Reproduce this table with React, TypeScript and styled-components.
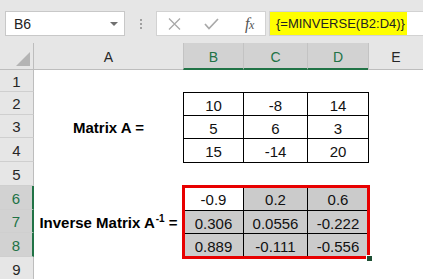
import React from "react";
import styled, { createGlobalStyle } from "styled-components";

const Global = createGlobalStyle`
  html, body { margin: 0; padding: 0; background: #fff; }
  body { font-family: "Liberation Sans", Arial, sans-serif; overflow: hidden; }
  * { box-sizing: border-box; }
`;

const GREEN = "#217346";

const Page = styled.div`
  width: 423px;
  height: 279px;
  overflow: hidden;
  display: flex;
  flex-direction: column;
  background: #fff;
`;

const FormulaBar = styled.div`
  height: 43px;
  flex: none;
  background: #e6e6e6;
  display: flex;
  align-items: flex-start;
  padding: 11px 0 0 5px;
`;

const NameBox = styled.div`
  width: 120px;
  height: 25px;
  background: #fff;
  border: 1px solid #c8c8c8;
  display: flex;
  align-items: center;
  justify-content: space-between;
  padding: 0 6px 0 8px;
  font-size: 14px;
  color: #222;
`;

const Caret = styled.span`
  width: 0;
  height: 0;
  border-left: 4px solid transparent;
  border-right: 4px solid transparent;
  border-top: 4px solid #707070;
`;

const Grip = styled.div`
  display: flex;
  flex-direction: column;
  gap: 2px;
  margin: 8px 14px 0 15px;
`;

const GripDot = styled.span`
  width: 2px;
  height: 2px;
  background: #a0a0a0;
`;

const EditBox = styled.div`
  width: 110px;
  height: 25px;
  background: #fff;
  border: 1px solid #d2d2d2;
  display: flex;
  align-items: center;
  padding-left: 11px;
`;

const IconSlot = styled.span<{ $gap: number }>`
  display: flex;
  margin-right: ${(p) => p.$gap}px;
`;

const Fx = styled.span`
  font-family: "Liberation Serif", "Times New Roman", serif;
  font-style: italic;
  font-size: 16px;
  color: #555;
  letter-spacing: -0.5px;
`;

const FxSub = styled.span`
  font-size: 12px;
`;

const FormulaBox = styled.div`
  flex: 1;
  margin-left: 3px;
  height: 25px;
  background: #fff;
  border: 1px solid #d2d2d2;
  border-right: none;
  display: flex;
`;

const Highlight = styled.div`
  width: 137px;
  height: 100%;
  background: #ffff00;
  display: flex;
  align-items: center;
  padding-left: 6px;
  font-size: 13px;
  color: #222;
  white-space: nowrap;
`;

const Sheet = styled.div`
  flex: 1;
  display: grid;
  grid-template-columns: 34px 149px 60px 64px 61px 1fr;
  grid-template-rows: 27px 22px 23px 23px 24px 24px 24px 23px 24px 24px;
  overflow: hidden;
`;

const Corner = styled.div`
  background: #e6e6e6;
  border-right: 1px solid #bdbdbd;
  border-bottom: 1px solid #bdbdbd;
  display: flex;
  align-items: flex-end;
  justify-content: flex-end;
  padding: 0 3px 3px 0;
`;

const CornerTri = styled.span`
  width: 0;
  height: 0;
  border-left: 14px solid transparent;
  border-bottom: 14px solid #b4b4b4;
`;

const ColHead = styled.div<{ $sel?: boolean; $first?: boolean }>`
  background: ${(p) => (p.$sel ? "#d2d2d2" : "#e6e6e6")};
  color: ${(p) => (p.$sel ? GREEN : "#262626")};
  border-left: ${(p) => (p.$first ? "none" : "1px solid #c3c3c3")};
  border-bottom: ${(p) => (p.$sel ? `2px solid ${GREEN}` : "1px solid #bdbdbd")};
  display: flex;
  align-items: center;
  justify-content: center;
  padding-top: 2px;
  font-size: 14px;
`;

const RowHead = styled.div<{ $sel?: boolean }>`
  grid-column: 1;
  background: ${(p) => (p.$sel ? "#d2d2d2" : "#e6e6e6")};
  color: ${(p) => (p.$sel ? GREEN : "#262626")};
  border-right: ${(p) => (p.$sel ? `2px solid ${GREEN}` : "1px solid #bdbdbd")};
  border-bottom: 1px solid #cfcfcf;
  display: flex;
  align-items: center;
  justify-content: center;
  font-size: 15px;
  padding-top: 1px;
`;

const Label = styled.div<{ $row: number }>`
  grid-column: 2;
  grid-row: ${(p) => p.$row};
  display: flex;
  align-items: center;
  justify-content: center;
  font-weight: bold;
  font-size: 15px;
  color: #000;
  white-space: nowrap;
  padding-top: 2px;
`;

const LabelText = styled.span`
  display: inline-block;
`;

const Sup = styled.sup`
  font-size: 10px;
  vertical-align: 6px;
  line-height: 0;
  margin-left: 1px;
`;

const Matrix = styled.div<{ $rows: string; $row: string; $flagged?: boolean }>`
  grid-column: 3 / 6;
  grid-row: ${(p) => p.$row};
  align-self: start;
  justify-self: start;
  position: relative;
  display: grid;
  grid-template-columns: 59px 63px 60px;
  grid-template-rows: ${(p) => p.$rows};
  gap: 1px;
  padding: 1px;
  background: #000;
  outline: ${(p) => (p.$flagged ? "3px solid #e80000" : "none")};
  outline-offset: -2px;
  z-index: 1;
  ${(p) =>
    p.$flagged
      ? `&::after {
    content: "";
    position: absolute;
    right: -4px;
    bottom: -4px;
    width: 5px;
    height: 5px;
    background: #1d4f33;
    border: 1px solid #fff;
  }`
      : ""}
`;

const MCell = styled.div<{ $fill?: boolean }>`
  background: ${(p) => (p.$fill ? "#cbcbcb" : "#fff")};
  display: flex;
  align-items: center;
  justify-content: center;
  font-size: 15px;
  color: #111;
  padding-top: 2px;
`;

const XIcon = () => (
  <svg width="13" height="12" viewBox="0 0 13 12">
    <path d="M1 0.5 L12 11.5 M12 0.5 L1 11.5" stroke="#a9a9a9" strokeWidth="1.3" fill="none" />
  </svg>
);

const CheckIcon = () => (
  <svg width="15" height="12" viewBox="0 0 15 12">
    <path d="M1 6 L5 10.5 L14 1" stroke="#a9a9a9" strokeWidth="1.7" fill="none" />
  </svg>
);

const cols = ["A", "B", "C", "D", "E"];
const selCols = new Set(["B", "C", "D"]);
const matA = [
  ["10", "-8", "14"],
  ["5", "6", "3"],
  ["15", "-14", "20"],
];
const inv = [
  ["-0.9", "0.2", "0.6"],
  ["0.306", "0.0556", "-0.222"],
  ["0.889", "-0.111", "-0.556"],
];

export default function App() {
  return (
    <Page>
      <Global />
      <FormulaBar>
        <NameBox>
          <span>B6</span>
          <Caret />
        </NameBox>
        <Grip>
          <GripDot />
          <GripDot />
          <GripDot />
        </Grip>
        <EditBox>
          <IconSlot $gap={23}>
            <XIcon />
          </IconSlot>
          <IconSlot $gap={26}>
            <CheckIcon />
          </IconSlot>
          <Fx>
            f<FxSub>x</FxSub>
          </Fx>
        </EditBox>
        <FormulaBox>
          <Highlight>{"{=MINVERSE(B2:D4)}"}</Highlight>
        </FormulaBox>
      </FormulaBar>
      <Sheet>
        <Corner>
          <CornerTri />
        </Corner>
        {cols.map((c, i) => (
          <ColHead key={c} $sel={selCols.has(c)} $first={i === 0}>
            {c}
          </ColHead>
        ))}
        {[1, 2, 3, 4, 5, 6, 7, 8, 9].map((r) => (
          <RowHead key={r} $sel={r >= 6 && r <= 8} style={{ gridRow: r + 1 }}>
            {r}
          </RowHead>
        ))}
        <Label $row={4}>Matrix A =</Label>
        <Matrix $row="3 / 6" $rows="22px 22px 23px">
          {matA.flat().map((v, i) => (
            <MCell key={i}>{v}</MCell>
          ))}
        </Matrix>
        <Label $row={8}>
          <LabelText>
            Inverse Matrix A<Sup>-1</Sup> =
          </LabelText>
        </Label>
        <Matrix $row="7 / 10" $rows="23px 22px 23px" $flagged>
          {inv.flat().map((v, i) => (
            <MCell key={i} $fill={i !== 0}>
              {v}
            </MCell>
          ))}
        </Matrix>
      </Sheet>
    </Page>
  );
}
